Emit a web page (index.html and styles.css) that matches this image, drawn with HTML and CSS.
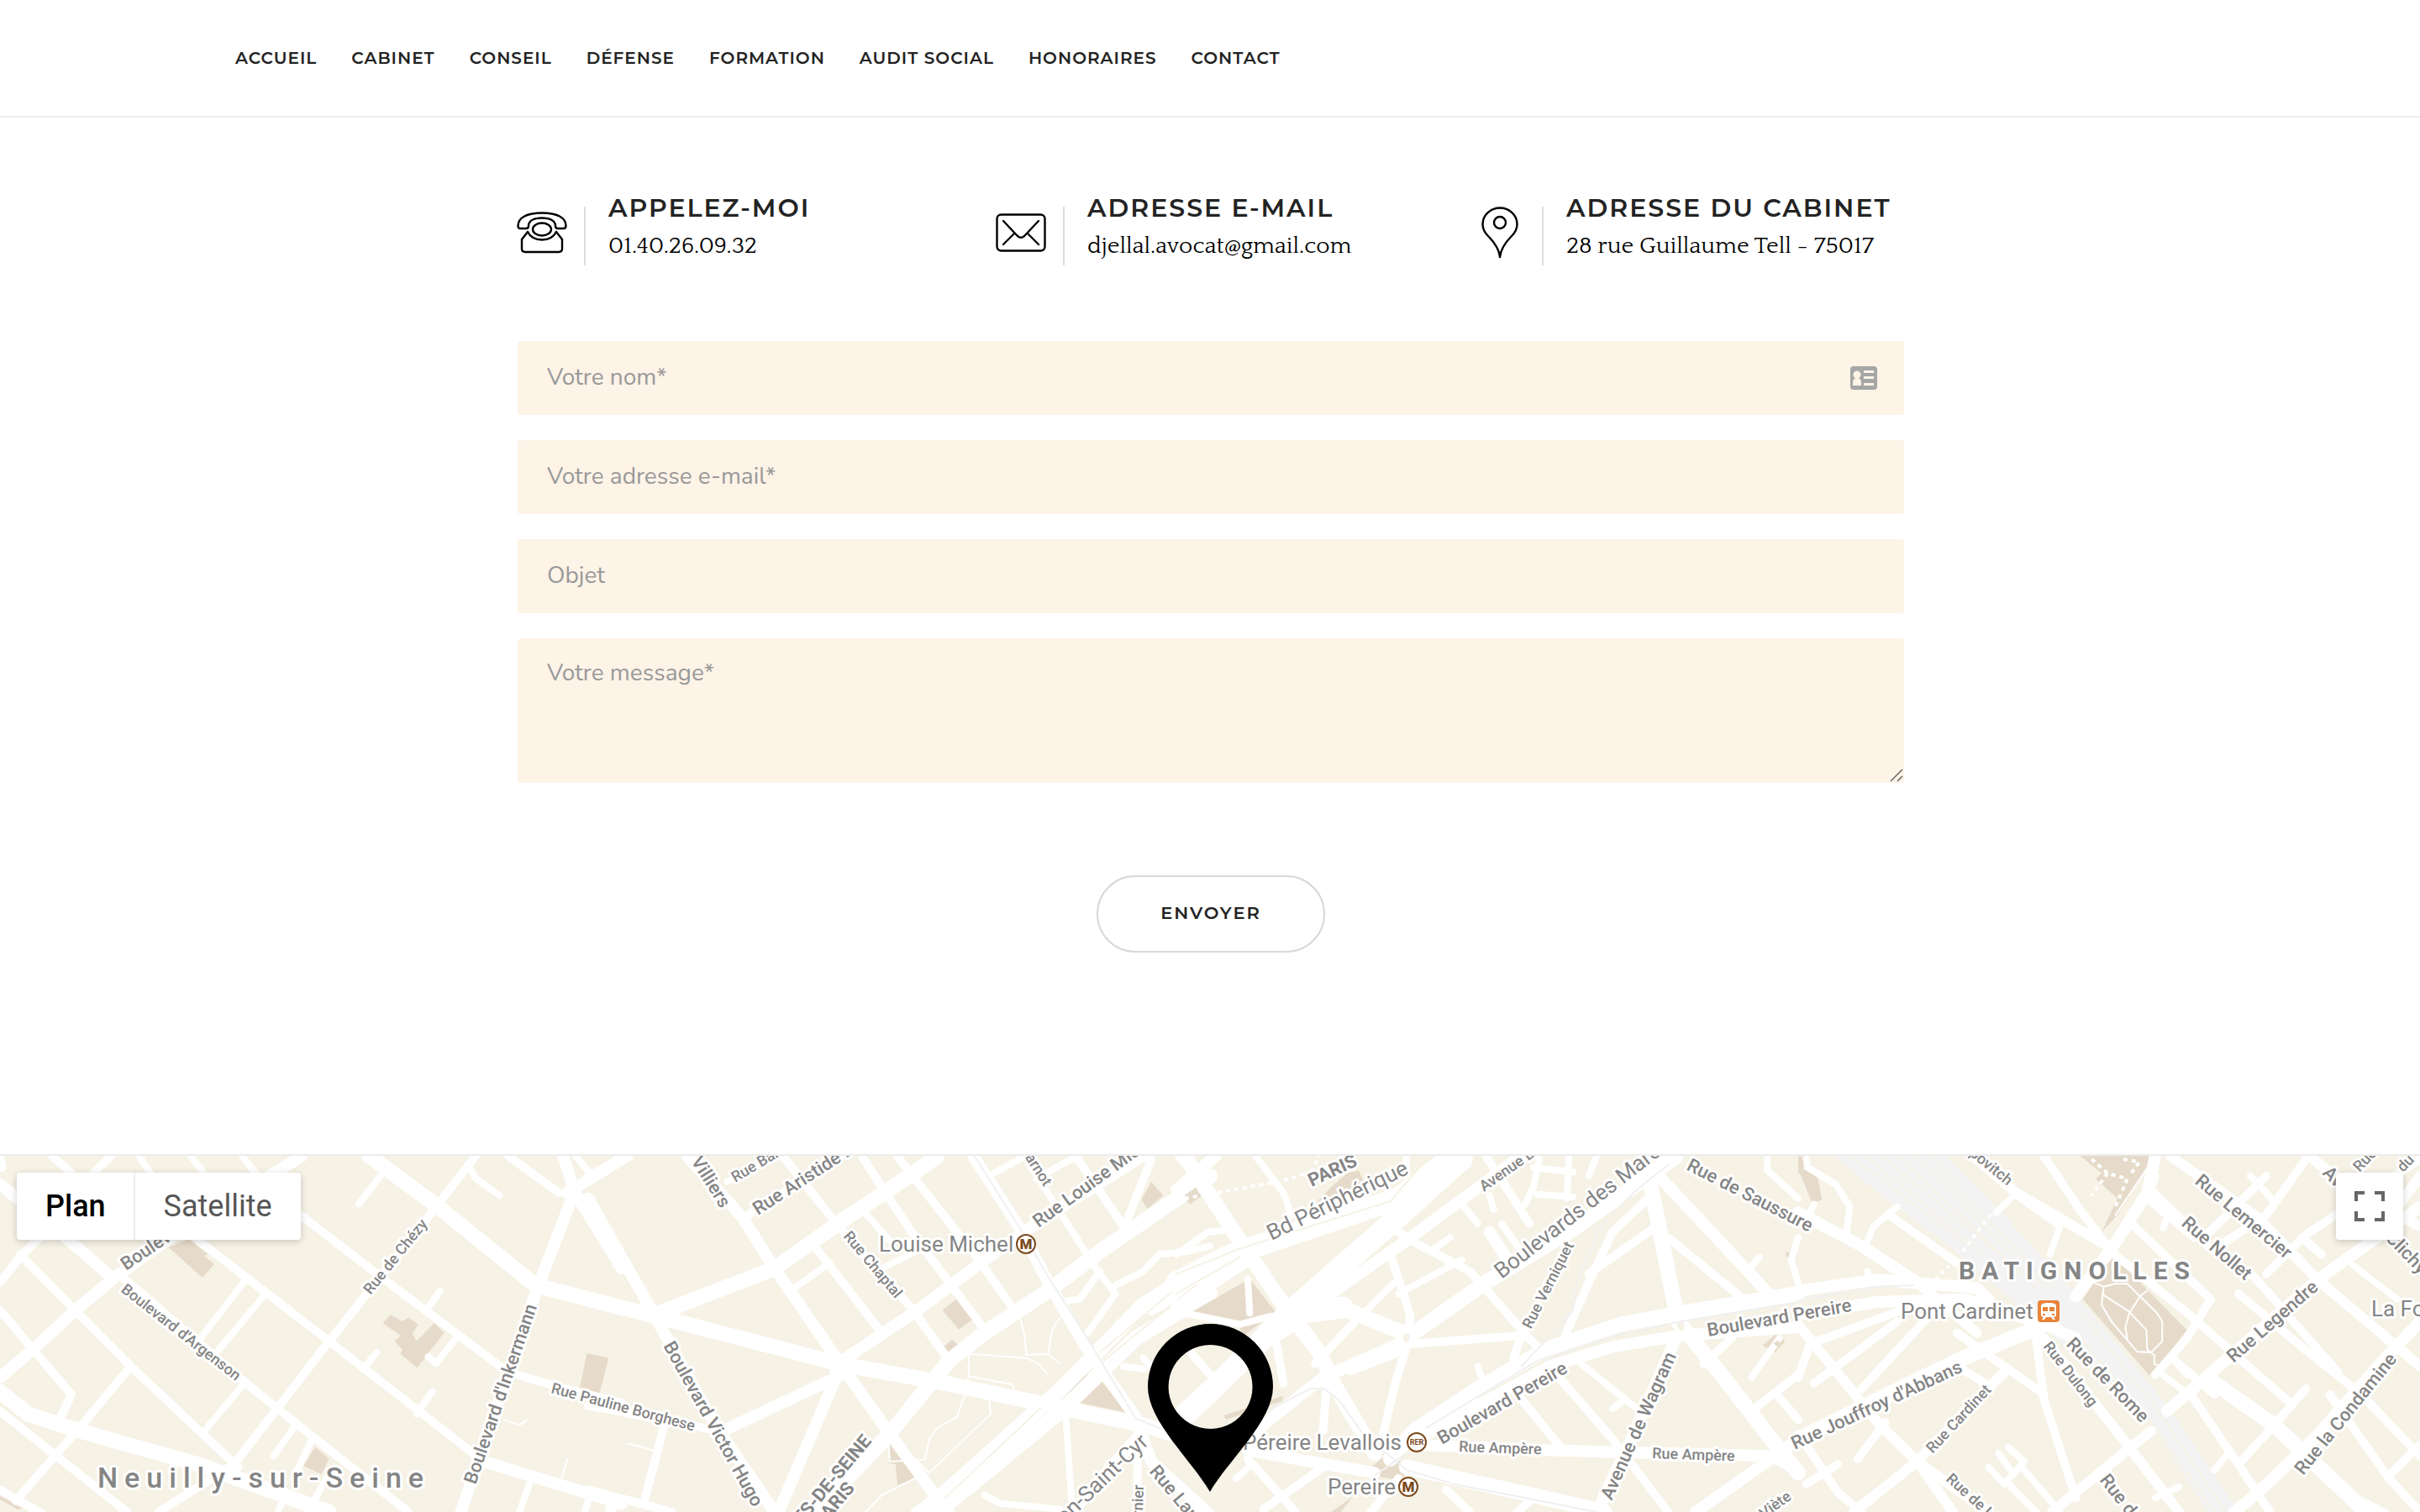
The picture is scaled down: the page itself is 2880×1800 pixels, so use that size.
FILE: index.html
```html
<!DOCTYPE html>
<html lang="fr">
<head>
<meta charset="utf-8">
<meta name="viewport" content="width=device-width, initial-scale=1">
<title>Contact</title>
<link rel="stylesheet" href="styles.css">
</head>
<body>
<header class="site-header">
  <nav class="nav" aria-label="Menu principal">
    <a href="#accueil">Accueil</a>
    <a href="#cabinet">Cabinet</a>
    <a href="#conseil">Conseil</a>
    <a href="#defense">Défense</a>
    <a href="#formation">Formation</a>
    <a href="#audit">Audit social</a>
    <a href="#honoraires">Honoraires</a>
    <a href="#contact">Contact</a>
  </nav>
</header>

<main class="contact">
  <div class="infos">
    <div class="info">
      <svg class="info-icon" viewBox="0 0 60 62" aria-hidden="true">
        <path d="M1.500 23C1.500 13 12 7.500 30 7.500S58.500 13 58.500 23c0 2-1 3-3 3H49c-2 0-3-1-3-3 0-6-6-9.500-16-9.500S14 17 14 23c0 2-1 3-3 3H4.500c-2 0-3-1-3-3z"/>
        <path d="M13 30l-7 9v11c0 3 1.500 4 4 4h40c2.500 0 4-1 4-4V39l-7-9"/>
        <path d="M13 30c3 6 9 9.500 17 9.500S44 36 47 30"/>
        <ellipse cx="30" cy="27" rx="11" ry="7.500"/>
      </svg>
      <div class="info-text">
        <h2>Appelez-moi</h2>
        <p>01.40.26.09.32</p>
      </div>
    </div>
    <div class="info">
      <svg class="info-icon" viewBox="0 0 60 62" aria-hidden="true">
        <rect x="1.500" y="9.500" width="57" height="43" rx="5"/>
        <path d="M9 17l17 18c3 2.500 5 2.500 8 0l17-18M9 45l13-13M51 45L38 32"/>
      </svg>
      <div class="info-text">
        <h2>Adresse e-mail</h2>
        <p>djellal.avocat@gmail.com</p>
      </div>
    </div>
    <div class="info">
      <svg class="info-icon" viewBox="0 0 60 62" aria-hidden="true">
        <path d="M30 60C29 51 24 43 16 35 11 30 9.500 26 9.500 21 9.500 10 19 1.500 30 1.500S50.500 10 50.500 21c0 5-1.500 9-6.500 14-8 8-13 16-14 25z"/>
        <circle cx="30" cy="19" r="7"/>
      </svg>
      <div class="info-text">
        <h2>Adresse du cabinet</h2>
        <p>28 rue Guillaume Tell - 75017</p>
      </div>
    </div>
  </div>

  <form class="form">
    <div class="field">
      <label class="hidden" for="nom">Votre nom</label>
      <input id="nom" type="text" placeholder="Votre nom*">
      <svg class="card-icon" viewBox="0 0 32 28" aria-hidden="true">
        <rect width="32" height="28" rx="4" fill="#a6a6a6"/>
        <circle cx="8" cy="10" r="4.500" fill="#fdf3e7"/>
        <path d="M3 23v-3c0-4 2-6 5-6s5 2 5 6v3zM16 5h12v3H16zM16 12h12v3H16zM16 20h12v3H16z" fill="#fdf3e7"/>
      </svg>
    </div>
    <div class="field">
      <label class="hidden" for="email">Votre adresse e-mail</label>
      <input id="email" type="email" placeholder="Votre adresse e-mail*">
    </div>
    <div class="field">
      <label class="hidden" for="objet">Objet</label>
      <input id="objet" type="text" placeholder="Objet">
    </div>
    <div class="field">
      <label class="hidden" for="message">Votre message</label>
      <textarea id="message" placeholder="Votre message*"></textarea>
      <svg class="grip" viewBox="0 0 16 16" aria-hidden="true"><path d="M1 15L15 1M9 15l6-6"/></svg>
    </div>
    <button class="send" type="submit">Envoyer</button>
  </form>
</main>

<section class="map" aria-label="Plan d'accès">
  <svg class="map-canvas" viewBox="0 0 2880 424" preserveAspectRatio="xMidYMin slice" aria-hidden="true">
    <!-- Each quarter of the map has its own survey grid -->
    <g transform="translate(0 -16) scale(.47194 .33333)">
      <path class="land" d="M425 375L475 345 525 400 515 405 540 435 510 483zM985 615L1015 640 1030 625 1055 650 1040 680 1050 710 1095 645 1120 680 1052 805 1010 755 1015 740 995 710 1010 690 965 645zM1480 753L1535 770 1510 905 1460 890zM795 1088L830 1130 810 1185 765 1155zM0 1262L55 1305 45 1312 0 1275z"/>
      <path class="road w8" d="M620 490L500 710M670 540L540 760M610 870L510 1040M975 90L905 220M1110 530L1075 600M1150 700L1100 790 1080 765M950 750L915 810M1090 890L1050 970M1185 90L1200 130 1260 190M740 1020L690 1120M790 1050L740 1200M830 1180L780 1310M710 1290L700 1320M1340 1200L1310 1320M1490 1250L1475 1320M1555 1270L1545 1320M1450 47L1500 130M480 47L520 120M610 47L650 120M350 47L380 110"/>
      <path class="road w10" d="M300 470L620 860 770 1030 1030 1320M500 350L830 710 1220 1140M740 240L960 480 1280 820 1400 870 1568 930M1200 47L1100 230 830 710 590 1150 400 1320M280 47L200 160M130 47L220 160M100 340L50 410 0 500M50 400L190 600 330 800 510 1040 600 1160M0 600L90 750 180 900 150 990M330 800L200 1020 40 1280M0 960L320 1320M0 1240L110 1330M1280 47L1410 180M0 50L5 90"/>
      <path class="road w14" d="M0 150L150 320 280 480M0 840L90 730 190 600 300 470 460 310 760 50M1450 170L1350 540 1160 1330M1420 47L1450 180 1568 450M1568 60L1430 180M1220 1140L1568 1290"/>
      <path class="road w18" d="M930 47L1100 225 1350 510 1568 590M0 890L70 970 200 1030 500 1150 830 1320"/>
      <path class="path" d="M1270 990L1310 1010 1330 990M1430 1130L1415 1210"/>
    </g>
    <g transform="translate(700 -16) scale(.47194 .33333)">
      <path class="land" d="M930 558L972 630 935 668 893 600zM918 703L940 735 915 762 897 730zM1295 855L1360 965 1240 930zM1420 140L1450 190 1410 237 1395 205zM1530 165L1548 190 1520 220 1500 200zM760 1070L830 1195 780 1225 775 1150 758 1145zM1265 785L1170 915 1160 910zM1250 830L1285 820 1215 920 1195 920z"/>
      <path class="road w8" d="M350 140L475 47M690 240L760 350M610 430L520 520M840 380L740 450M1010 120L1100 50M1130 130L1230 50M1190 250L1280 450 1330 540 1260 680M1568 370L1510 390 1440 400 1400 460 1330 510M1290 460L1240 560 1210 565M1205 990L1220 1300M1000 1260L1040 1290 1190 1310M1350 800L1400 810M1400 770L1430 820M60 1270L50 1320M1100 50L1190 250"/>
      <path class="road w10" d="M490 47L620 280 820 600 910 780M690 50L820 330 1000 670M780 50L990 430 1080 610M570 370L740 680M1230 50L1350 300M1420 60L1350 310M1490 50L1530 110M390 270L640 47M190 1020L140 1290M0 1240L210 1320M0 940L330 1030M1385 1030L1385 1220"/>
      <path class="road w14" d="M0 130L100 47M0 200L80 400 160 600 300 960 330 1030 470 1320M250 50L390 270 470 450 640 800 760 1040 880 1270 910 1320M630 790L830 600 990 430 1150 270 1400 47M640 790L480 1320M640 830L340 1030M970 47L1090 310 1160 500 1250 720 1380 980 1420 1140 1568 1330M1400 1030L1220 1320"/>
      <path class="road w18" d="M0 560L170 620 630 790 900 860 1200 950 1400 1010 1470 1040M160 620L470 450 640 280 820 110 880 50M1568 120L1300 380 1160 530 1000 680 910 780 760 1040 620 1250 570 1330"/>
      <path class="road w18" d="M1568 430L1400 580 1200 870 900 1250 830 1330M1568 470L1420 590M1568 540L1380 700 1200 950 960 1230 880 1320"/>
      <path class="ring" d="M800 600h35v30h-35zM610 780h50v50h-50z"/>
      <path class="divider" d="M1500 500L1290 750M1140 950L900 1270M1540 500L1300 780"/>
      <path class="path" d="M960 750L960 830 950 900 930 980 880 1020 860 1060 850 1130 830 1140 860 1180 1015 970 1010 900M960 755L1105 770 1135 790 1160 830M1090 630L1100 690 1105 760 1160 755 1190 790M1160 755L1170 670 1190 625M960 835L1070 865 1075 890M830 1195L740 1260 700 1320M100 1075L165 1100M758 1070L760 1140 830 1135"/>
      <path class="rail" d="M975 50L1090 310 1160 480 1250 680 1380 985 1440 1020"/>
    </g>
    <g transform="translate(1400 -16) scale(.47194 .33333)">
      <path class="land" d="M30 612L185 487 250 605 170 690 155 650zM390 160L430 110 460 100 475 150 420 185 350 220zM490 1160L540 1105 580 1160 570 1210 500 1190zM120 975L270 905 265 925 125 990zM445 1265L390 1320 415 1320zM20 190L50 160 60 190 35 220zM1478 725L1515 680 1535 710 1510 750zM1537 393h12v16h-12z"/>
      <path class="road w8" d="M0 400L80 320 150 310M200 50L270 180 290 260M900 90L1000 105M910 185L1000 195M915 60L900 160 880 220M990 50L985 200M1060 47L1040 120M690 340L650 380M720 420L560 540M550 500L480 600M1470 410L1440 460M1520 700L1450 840M1020 790L1160 950M1130 920L1100 950M760 800L770 840M150 1200L190 1150M1490 60L1490 100 1568 200M720 220L760 290M790 190L800 240M180 490L185 610M30 612L160 650 240 620M580 50L580 110M755 910L750 950M1568 340L1550 420 1568 500M820 290L860 370"/>
      <path class="road w10" d="M780 47L890 290M540 300L590 350 740 460 890 700 930 760M540 400L590 620 580 730 550 870 520 1050M590 720L870 690 850 770M1200 310L1040 470M1240 340L1430 560M1190 200L1100 320 1040 500 980 690M940 800L1100 1060 1240 1320M860 900L970 1090M1440 970L1568 830M1330 790L1400 700M380 840L370 1030M450 640L350 790M320 640L250 700 270 860M180 1130L300 1320M380 1150L220 1310M30 740L110 870 20 990M1520 910L1568 990M680 1240L740 1320M560 1200L490 1320M900 1270L860 1320"/>
      <path class="road w14" d="M0 170L100 47M870 47L590 340 400 530M0 590L170 430M560 720L370 840 200 1030M550 750L440 810M1210 110L1500 550M600 1080L960 1100 1500 1120M1568 1060L1310 1320M1568 660L1270 690 1100 730 940 800 620 1050M1260 700L1150 1050 1060 1320M790 320L840 430M1568 1170L1500 1120M180 1100L500 1180"/>
      <path class="road w18" d="M20 47L150 330 260 560 360 750 400 870 500 1110M1260 50L1000 310 780 500 590 690 380 570M1190 110L1265 640 1380 840 1500 1060 1568 1180M1568 540L1270 610 1120 650 930 740 760 880 600 1030 540 1130M580 1160L900 1260 1080 1320"/>
      <path class="road w24" d="M0 500L140 400 350 300 560 200 700 47M720 60L540 290 290 600 100 870 0 1000M380 560L300 610 420 590"/>
      <path class="divider" d="M0 470L160 380 360 290 540 210 630 60M0 540L160 410"/>
      <path class="land" d="M1505 718l10-10 10 10-10 12z"/>
      <path class="block" d="M570 695l8-12 10 0 0 20-10 14zM1260 650l8-12 12 5 0 25-10 6z"/>
      <path class="dots" d="M0 205L100 180 260 140 340 105M340 105L360 47"/>
      <path class="rail" d="M1240 80L1160 170 1070 300 1010 500 1000 600 930 710 870 800M1568 570L1270 640 1080 700 910 780 630 1020M200 980L340 878 375 882 410 920 470 1040 580 1170 700 1220 1060 1320M580 1110L500 1190"/>
    </g>
    <g transform="translate(2140 -16) scale(.47194 .33333)">
      <path class="yard" d="M90 47L370 47 500 230 700 540 930 940 1115 1325 1035 1325 880 980 600 640 390 380 210 190z"/>
      <path class="divider" d="M130 47L420 360M170 47L460 390M210 47L560 460M250 47L600 520M290 47L620 520M330 47L640 520M700 680L880 980M720 620L920 980M880 980L1050 1320M910 960L1080 1320"/>
      <path class="land" d="M785 420L800 410 980 670 910 800 885 832 718 560zM710 47L900 47 805 260 765 320 805 200 750 130 765 110zM0 50h20l-10 60-10 0zM0 100L30 95 50 130 60 205 35 215 10 130z"/>
      <path class="road w8" d="M20 60L25 90 95 150 130 230 120 340M250 230L190 300 170 370M550 180L500 250M560 200L660 300 635 400M1140 120L1200 210M930 270L920 305M1400 440L1510 560M920 830L1000 920M950 780L980 830M480 1160L520 1220 570 1140 530 1090M505 1110L540 1180M530 1220L600 1320M570 1170L660 1320M175 460L180 500M40 220L20 280M900 1270L960 1230M1050 1170L1090 1100M1380 1250L1480 1320"/>
      <path class="road w10" d="M620 50L710 240 780 370M230 260L400 430M890 170L1040 380 1150 480 1280 690 1360 820M840 290L1040 560M790 390L990 620 1240 930M1280 60L1180 260 1060 370M1568 60L1280 330 1180 470M1270 340L1320 400M1040 560L980 700 900 830M1110 540L1270 730 1420 900 1568 1120M1280 880L1200 1010 1110 1150M950 780L1050 900M990 900L1110 1150 1190 1320M1340 900L1490 1200 1568 1320M1568 1080L1490 1190M400 680L480 760 620 900M600 700L620 920 700 1270M250 640L40 860M330 620L160 880M380 780L470 860M260 600L30 720 0 840M480 880L520 820M0 1040L100 1250 160 1320M220 1000L150 1130M100 1150L20 1220M900 120L880 200 1000 340M1030 330L1180 120"/>
      <path class="road w12" d="M0 650L200 1000 300 1140 390 1320M620 700L830 1080 960 1320M520 820L300 1140 140 1320M890 1030L700 1250 640 1320M940 50L1160 270 1310 490 1510 730 1568 800M550 180L780 370M550 180L450 60M300 1140L480 1320M300 500L450 680M1290 50L1380 150 1568 300M1568 120L1480 290"/>
      <path class="road w14" d="M0 250L160 370 300 500M900 50L880 180 790 380 700 550M1568 230L1310 490 1060 800 930 960M1568 640L1500 740 1300 1060 1160 1250 1100 1320M0 615L200 570 420 560 620 650 700 700M0 530L200 490 450 520 480 560"/>
      <path class="road w18" d="M640 640L400 780 200 920 0 1060M1040 850L1200 1010 1440 1330"/>
      <path class="path" d="M745 500L770 515 800 505 830 505 862 550 905 610 918 640 918 710 890 750 855 748 790 640 765 580 770 515M770 545L835 605 878 670 880 740 898 760 898 790 910 800M862 550L835 610 825 660 830 700M862 550L880 530M900 50L800 260"/>
      <path class="dots" d="M780 110L740 190M740 60L780 110 830 130 800 230M820 60L860 70 840 110M415 390L490 250M345 490L380 440"/>
      <path class="rail" d="M0 565L200 515 290 510"/>
    </g>

    <g class="labels">
      <g class="s18">
        <text transform="translate(143 161) rotate(38)">Boulevard d'Argenson</text>
        <text transform="translate(441 166) rotate(-51)">Rue de Chézy</text>
        <text transform="translate(655 282) rotate(15)">Rue Pauline Borghese</text>
        <text transform="translate(1003 96) rotate(50)">Rue Chaptal</text>
        <text transform="translate(1213 -8) rotate(57)">Carnot</text>
        <text transform="translate(1766 43) rotate(-35)">Avenue Brunetière</text>
        <text transform="translate(1822 207) rotate(-63)">Rue Verniquet</text>
        <text transform="translate(1736 352) rotate(2)">Rue Ampère</text>
        <text transform="translate(1966 360) rotate(2)">Rue Ampère</text>
        <text transform="translate(2389 36) rotate(39)" text-anchor="end">Rostropovitch</text>
        <text transform="translate(2431 227) rotate(52)">Rue Dulong</text>
        <text transform="translate(2300 355) rotate(-47)">Rue Cardinet</text>
        <text transform="translate(875 32) rotate(-31)">Rue Barbès</text>
        <text transform="translate(2133 408) rotate(-36)" text-anchor="end">Rue Viète</text>
        <text transform="translate(2315 386) rotate(42)">Rue de Lévis</text>
        <text transform="translate(1361 392) rotate(-88)" text-anchor="end">Rue Fournier</text>
        <text transform="translate(2808 20) rotate(-46)">Rue</text>
        <text transform="translate(2860 20) rotate(-46)">du</text>
      </g>
      <g class="s22">
        <text transform="translate(1236 86) rotate(-36)">Rue Louise Michel</text>
        <text transform="translate(1716 344) rotate(-30)">Boulevard Pereire</text>
        <text transform="translate(2033 215) rotate(-10)">Boulevard Pereire</text>
        <text transform="translate(822 6) rotate(58)">Villiers</text>
        <text transform="translate(2763 21) rotate(46)">Avenue de Clichy</text>
        <text transform="translate(150 137) rotate(-34)">Boulevard Bineau</text>
        <text transform="translate(566 392) rotate(-71)">Boulevard d'Inkermann</text>
        <text transform="translate(902 71) rotate(-33)">Rue Aristide Briand</text>
        <text transform="translate(789 226) rotate(61)">Boulevard Victor Hugo</text>
        <text transform="translate(1367 376) rotate(50)">Rue Laugier</text>
        <text transform="translate(2006 16) rotate(27)">Rue de Saussure</text>
        <text transform="translate(1918 411) rotate(-66)">Avenue de Wagram</text>
        <text transform="translate(2136 350) rotate(-25)">Rue Jouffroy d'Abbans</text>
        <text transform="translate(2611 32) rotate(40)">Rue Lemercier</text>
        <text transform="translate(2595 82) rotate(41)">Rue Nollet</text>
        <text transform="translate(2658 247) rotate(-41)">Rue Legendre</text>
        <text transform="translate(2458 225) rotate(46)">Rue de Rome</text>
        <text transform="translate(2741 381) rotate(-51)">Rue la Condamine</text>
        <text transform="translate(2498 386) rotate(52)">Rue de Rome</text>
      </g>
      <g class="district">
        <text transform="translate(1038 340) rotate(-50)" text-anchor="end">HAUTS-DE-SEINE</text>
        <text transform="translate(1018 396) rotate(-50)" text-anchor="end">PARIS</text>
        <text transform="translate(1561 37) rotate(-25)">PARIS</text>
      </g>
      <g class="avenue">
        <text transform="translate(1368 342) rotate(-44)" text-anchor="end">Boulevard Gouvion-Saint-Cyr</text>
        <text transform="translate(1513 101) rotate(-26)">Bd Périphérique</text>
        <text transform="translate(1787 147) rotate(-38)">Boulevards des Maréchaux</text>
      </g>
      <g class="station">
        <text x="1046" y="114">Louise Michel</text>
        <text x="1668" y="350" text-anchor="end">Gare Péreire Levallois</text>
        <text x="1580" y="403">Pereire</text>
        <text x="2262" y="194">Pont Cardinet</text>
        <text x="2822" y="191">La Fourche</text>
      </g>
      <text class="town" x="116" y="395">Neuilly-sur-Seine</text>
      <text class="quarter" x="2331" y="147">BATIGNOLLES</text>
    </g>
    <g class="stops">
      <circle cx="1221" cy="105" r="11"/><text class="metro" x="1221" y="111">M</text>
      <circle cx="1676" cy="394" r="11"/><text class="metro" x="1676" y="400">M</text>
      <circle cx="1686" cy="341" r="11"/><text class="rer" x="1686" y="344">RER</text>
    </g>
    <g transform="translate(2425 172)">
      <rect width="26" height="26" rx="4" fill="#e8833a"/>
      <path d="M4 7c0-3 3-4 9-4s9 1 9 4v10c0 2-1 3-3 3l2 3h-3l-2-3h-6l-2 3H5l2-3c-2 0-3-1-3-3z" fill="#fff"/>
      <path d="M6 8h6v5H6zM14 8h6v5h-6zM6 16h3v2H6zM17 16h3v2h-3z" fill="#e8833a"/>
    </g>
    <path d="M1440 400C1418 362 1366 316 1366 275a74.500 75 0 0 1 149 0C1515 316 1462 362 1440 400zM1440.500 225a50 50 0 1 0 .1 0z" fill="#000" fill-rule="evenodd"/>
  </svg>
  <div class="map-types">
    <button type="button" class="map-type active">Plan</button>
    <button type="button" class="map-type">Satellite</button>
  </div>
  <button type="button" class="fullscreen" aria-label="Plein écran">
    <svg viewBox="0 0 36 36" aria-hidden="true"><path d="M2 12V2h10M24 2h10v10M34 24v10H24M12 34H2V24"/></svg>
  </button>
</section>
</body>
</html>
```
FILE: styles.css
```css
* {
  box-sizing: border-box;
}

body {
  margin: 0;
  background: #fff;
  color: #232323;
  font-family: "Montserrat", "Inter", "Liberation Sans", sans-serif;
}

.hidden {
  position: absolute;
  width: 1px;
  height: 1px;
  overflow: hidden;
  clip-path: inset(50%);
}

.site-header {
  padding: 54px 280px;
  border-bottom: 2px solid #ececec;
}

.nav {
  display: flex;
  flex-wrap: wrap;
  gap: 0 41px;
}

.nav a {
  color: inherit;
  font-size: 20px;
  font-weight: 600;
  line-height: 30px;
  letter-spacing: 1px;
  text-transform: uppercase;
  text-decoration: none;
}

.contact {
  max-width: 1710px;
  margin: 0 auto;
  padding: 88px 0 240px;
}

.infos {
  display: grid;
  grid-template-columns: repeat(3, 1fr);
}

.info {
  display: flex;
  padding-left: 30px;
}

.info-icon {
  flex: none;
  width: 60px;
  height: 62px;
  margin: 18px 20px 0 0;
  fill: none;
  stroke: #000;
  stroke-width: 2.4;
  stroke-linecap: round;
  stroke-linejoin: round;
}

.info-text {
  position: relative;
  padding-left: 29px;
}

.info-text::before {
  content: "";
  position: absolute;
  left: 0;
  top: 18px;
  width: 2px;
  height: 70px;
  background: #ddd;
}

.info h2 {
  margin: 0;
  font-size: 30px;
  font-weight: 600;
  line-height: 40px;
  letter-spacing: 2px;
  text-transform: uppercase;
  white-space: nowrap;
}

.info p {
  margin: 6px 0 0;
  color: #000;
  font-family: "Quattrocento", "DejaVu Serif Condensed", "DejaVu Serif", serif;
  font-size: 28px;
  line-height: 38px;
  white-space: nowrap;
}

.form {
  display: flex;
  flex-direction: column;
  gap: 30px;
  padding: 94px 29px 0 31px;
}

.field {
  position: relative;
}

.field input,
.field textarea {
  display: block;
  width: 100%;
  height: 88px;
  padding: 0 35px 2px;
  border: 0;
  border-radius: 4px;
  background: #fdf3e7;
  color: #232323;
  font-family: "Nunito", "Open Sans", sans-serif;
  font-size: 28px;
}

.field textarea {
  height: 172px;
  padding: 23px 35px;
  line-height: 36px;
  resize: none;
}

.field ::placeholder {
  color: #999;
  opacity: 1;
}

.card-icon {
  position: absolute;
  top: 30px;
  right: 32px;
  width: 32px;
  height: 28px;
}

.grip {
  position: absolute;
  right: 1px;
  bottom: 1px;
  width: 16px;
  height: 16px;
  fill: none;
  stroke: #666;
  stroke-width: 1.5;
}

.send {
  align-self: center;
  width: 272px;
  height: 92px;
  margin-top: 80px;
  padding: 0 0 4px;
  border: 2px solid #d8d8d8;
  border-radius: 46px;
  background: #fff;
  color: #232323;
  font: inherit;
  font-size: 21px;
  font-weight: 600;
  letter-spacing: 2px;
  text-transform: uppercase;
}

.map {
  position: relative;
  overflow: hidden;
  border-top: 2px solid #ececec;
  background: #f6f2e6;
  font-family: "Roboto", sans-serif;
}

.map-canvas {
  display: block;
  width: 100%;
  min-height: 424px;
}

.road,
.path,
.rail,
.divider,
.dots {
  fill: none;
  stroke: #fff;
  stroke-linecap: round;
  stroke-linejoin: round;
  vector-effect: non-scaling-stroke;
}

.w8 { stroke-width: 8px; }
.w10 { stroke-width: 10px; }
.w12 { stroke-width: 12px; }
.w14 { stroke-width: 14px; }
.w18 { stroke-width: 18px; }
.w24 { stroke-width: 26px; }

.path { stroke-width: 2px; }
.rail { stroke: #f0f0f0; stroke-width: 2px; }
.divider { stroke: #f6f2e6; stroke-width: 2px; }

.dots {
  stroke-width: 4px;
  stroke-dasharray: 5 5;
  stroke-linecap: butt;
}

.ring {
  fill: #fff;
}

.land {
  fill: #e6dbca;
}

.block {
  fill: #f6f2e6;
}

.yard {
  fill: #f3f3f3;
}

.labels {
  fill: #858585;
  stroke: #fff;
  stroke-width: 6px;
  stroke-linejoin: round;
  paint-order: stroke;
  font-weight: 500;
}

.s18 { font-size: 18px; }
.s22 { font-size: 22px; }

.district {
  font-size: 22px;
  font-weight: 700;
}

.avenue {
  font-size: 26px;
  font-weight: 400;
}

.station {
  font-size: 26px;
  font-weight: 400;
}

.town {
  font-size: 34px;
  letter-spacing: 8px;
}

.quarter {
  font-size: 30px;
  font-weight: 700;
  letter-spacing: 8px;
}

.stops {
  fill: #7b4a1e;
  text-anchor: middle;
}

.stops circle {
  fill: #fff;
  stroke: #7b4a1e;
  stroke-width: 2px;
}

.metro {
  font-size: 17px;
  font-weight: 900;
}

.rer {
  font-size: 9px;
  font-weight: 700;
}

.map-types {
  position: absolute;
  top: 20px;
  left: 20px;
  display: flex;
  border-radius: 4px;
  background: #fff;
  box-shadow: 0 2px 8px rgba(0, 0, 0, 0.2);
}

.map-type {
  height: 80px;
  padding: 0 34px;
  border: 0;
  background: none;
  color: #565656;
  font: 36px "Roboto", sans-serif;
}

.map-type.active {
  padding-right: 33px;
  border-right: 2px solid #eee;
  color: #000;
  font-weight: 500;
}

.fullscreen {
  position: absolute;
  top: 20px;
  right: 20px;
  display: grid;
  place-items: center;
  width: 80px;
  height: 80px;
  padding: 0;
  border: 0;
  border-radius: 4px;
  background: #fff;
  box-shadow: 0 2px 8px rgba(0, 0, 0, 0.2);
}

.fullscreen svg {
  width: 36px;
  height: 36px;
  fill: none;
  stroke: #666;
  stroke-width: 4;
}
```
